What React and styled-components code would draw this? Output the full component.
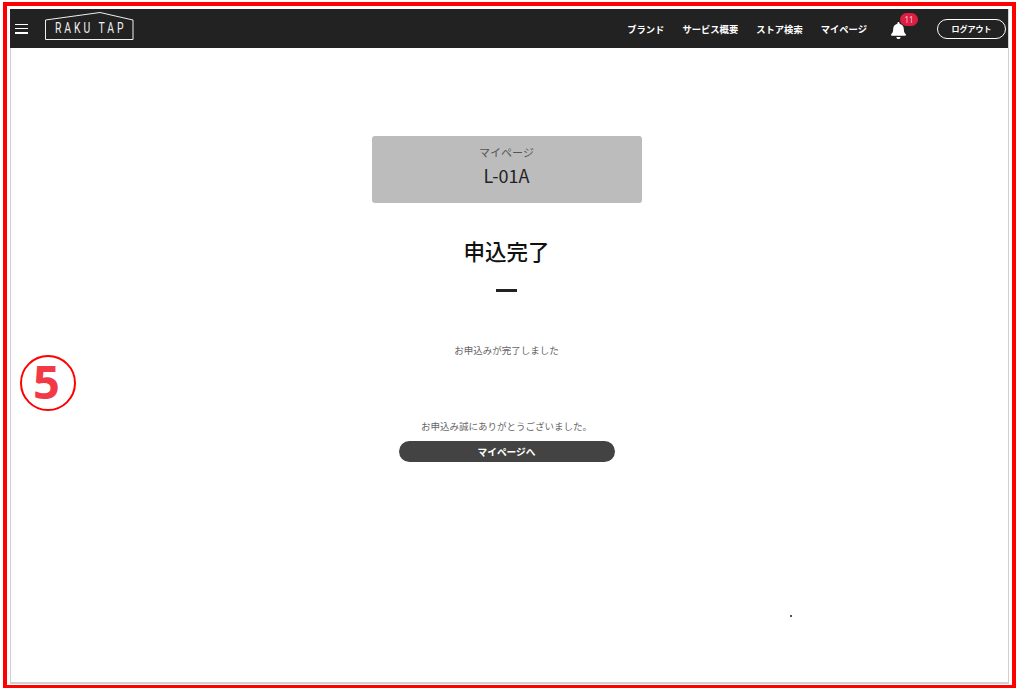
import React from "react";
import styled, { createGlobalStyle } from "styled-components";
import { FaBell } from "react-icons/fa";

const JP = `"Noto Sans CJK JP", "Noto Sans", sans-serif`;

const navItems = ["ブランド", "サービス概要", "ストア検索", "マイページ"];

const GlobalStyle = createGlobalStyle`
  html, body {
    margin: 0;
    padding: 0;
    background: #fff;
  }
  body {
    font-family: ${JP};
  }
`;

const Frame = styled.div`
  position: relative;
  box-sizing: border-box;
  width: 1013px;
  height: 686px;
  margin: 2px 0 0 3px;
  border: 4px solid #fe0000;
  border-bottom-width: 3px;
  padding: 3px 3px 0 3px;
`;

const Screen = styled.div`
  box-sizing: border-box;
  height: 675px;
  border: solid #cfcfcf;
  border-width: 0 1px 2px 1px;
  display: flex;
  flex-direction: column;
`;

const Header = styled.header`
  height: 39px;
  margin: 0 0 0 -1px;
  background: #222;
  display: flex;
  align-items: center;
  padding: 0 1px 0 5px;
`;

const Burger = styled.div`
  width: 13px;
  height: 10px;
  display: flex;
  flex-direction: column;
  justify-content: space-between;
  margin-right: 17px;
  span {
    display: block;
    height: 1.5px;
    background: #fff;
  }
`;

const Logo = styled.div`
  position: relative;
  width: 89px;
  height: 29px;
  margin-top: -5px;
  color: #f0f0f0;
  svg {
    position: absolute;
    inset: 0;
  }
  span {
    position: absolute;
    left: 10px;
    top: 9px;
    font: 400 14px/15px "Roboto", sans-serif;
    letter-spacing: 4px;
    white-space: nowrap;
    transform: scaleX(0.74);
    transform-origin: left center;
  }
`;

const Nav = styled.nav`
  margin-left: auto;
  display: flex;
  align-items: center;
  gap: 18px;
`;

const NavLink = styled.a`
  color: #fff;
  font-size: 9.3px;
  font-weight: 700;
  line-height: 14px;
  white-space: nowrap;
`;

const BellWrap = styled.div`
  position: relative;
  width: 18px;
  height: 20px;
  margin: 1px 12px 0 4px;
  color: #fff;
  font-size: 17px;
  display: flex;
  align-items: flex-end;
  justify-content: center;
`;

const Badge = styled.span`
  position: absolute;
  top: -6px;
  left: 11px;
  width: 18px;
  height: 13px;
  border-radius: 7px;
  background: #dc1e42;
  color: #f4c9d2;
  font: 400 8px/13px "Noto Sans", sans-serif;
  text-align: center;
`;

const LogoutButton = styled.button`
  width: 69px;
  height: 20px;
  margin-right: 1px;
  padding: 0;
  border: 1px solid #fff;
  border-radius: 10px;
  background: transparent;
  color: #fff;
  font-family: ${JP};
  font-size: 8px;
  font-weight: 700;
`;

const Main = styled.main`
  flex: 1;
  display: flex;
  flex-direction: column;
  align-items: center;
  padding-right: 6px;
`;

const TitleCard = styled.section`
  box-sizing: border-box;
  width: 270px;
  height: 67px;
  margin-top: 88px;
  border-radius: 3px;
  background: #bcbcbc;
  display: flex;
  flex-direction: column;
  align-items: center;
  padding-top: 8px;
`;

const CardLabel = styled.div`
  color: #555;
  font-size: 11px;
  line-height: 16px;
`;

const CardCode = styled.div`
  margin-top: 2px;
  color: #222;
  font-size: 18px;
  line-height: 26px;
`;

const Heading = styled.h1`
  margin: 33px 0 0;
  color: #111;
  font-size: 21.5px;
  font-weight: 500;
  line-height: 30px;
`;

const Rule = styled.div`
  width: 21px;
  height: 3px;
  margin-top: 23px;
  background: #222;
`;

const Message = styled.p`
  margin: 51px 0 0;
  color: #666;
  font-size: 9.5px;
  line-height: 14px;
`;

const Thanks = styled.p`
  margin: 62px 0 0;
  color: #666;
  font-size: 9.5px;
  line-height: 14px;
`;

const MyPageButton = styled.button`
  width: 216px;
  height: 21px;
  margin-top: 8px;
  padding: 0;
  border: 0;
  border-radius: 11px;
  background: #434343;
  color: #fff;
  font-family: ${JP};
  font-size: 9.7px;
  font-weight: 700;
`;

const StepMark = styled.div`
  position: absolute;
  left: 13px;
  top: 349px;
  box-sizing: border-box;
  width: 56px;
  height: 56px;
  border: 2px solid #f00;
  border-radius: 50%;
  padding: 0 3px 3px 0;
  display: flex;
  align-items: center;
  justify-content: center;
  color: #f23a46;
  font: 700 47px/1 "Open Sans", sans-serif;
`;

const Speck = styled.div`
  position: absolute;
  left: 783px;
  top: 609px;
  width: 2px;
  height: 2px;
  background: #555;
`;

export default function App() {
  return (
    <>
      <GlobalStyle />
      <Frame>
        <Screen>
          <Header>
            <Burger>
              <span />
              <span />
              <span />
            </Burger>
            <Logo>
              <svg width="89" height="29" viewBox="0 0 89 29" fill="none">
                <path
                  d="M0.5 8 L55 0.5 L88 8 V27.5 H0.5 Z"
                  stroke="currentColor"
                  strokeWidth="1"
                />
              </svg>
              <span>RAKU TAP</span>
            </Logo>
            <Nav>
              {navItems.map((item) => (
                <NavLink key={item}>{item}</NavLink>
              ))}
              <BellWrap>
                <FaBell />
                <Badge>11</Badge>
              </BellWrap>
              <LogoutButton>ログアウト</LogoutButton>
            </Nav>
          </Header>
          <Main>
            <TitleCard>
              <CardLabel>マイページ</CardLabel>
              <CardCode>L-01A</CardCode>
            </TitleCard>
            <Heading>申込完了</Heading>
            <Rule />
            <Message>お申込みが完了しました</Message>
            <Thanks>お申込み誠にありがとうございました。</Thanks>
            <MyPageButton>マイページへ</MyPageButton>
          </Main>
        </Screen>
        <StepMark>5</StepMark>
        <Speck />
      </Frame>
    </>
  );
}
